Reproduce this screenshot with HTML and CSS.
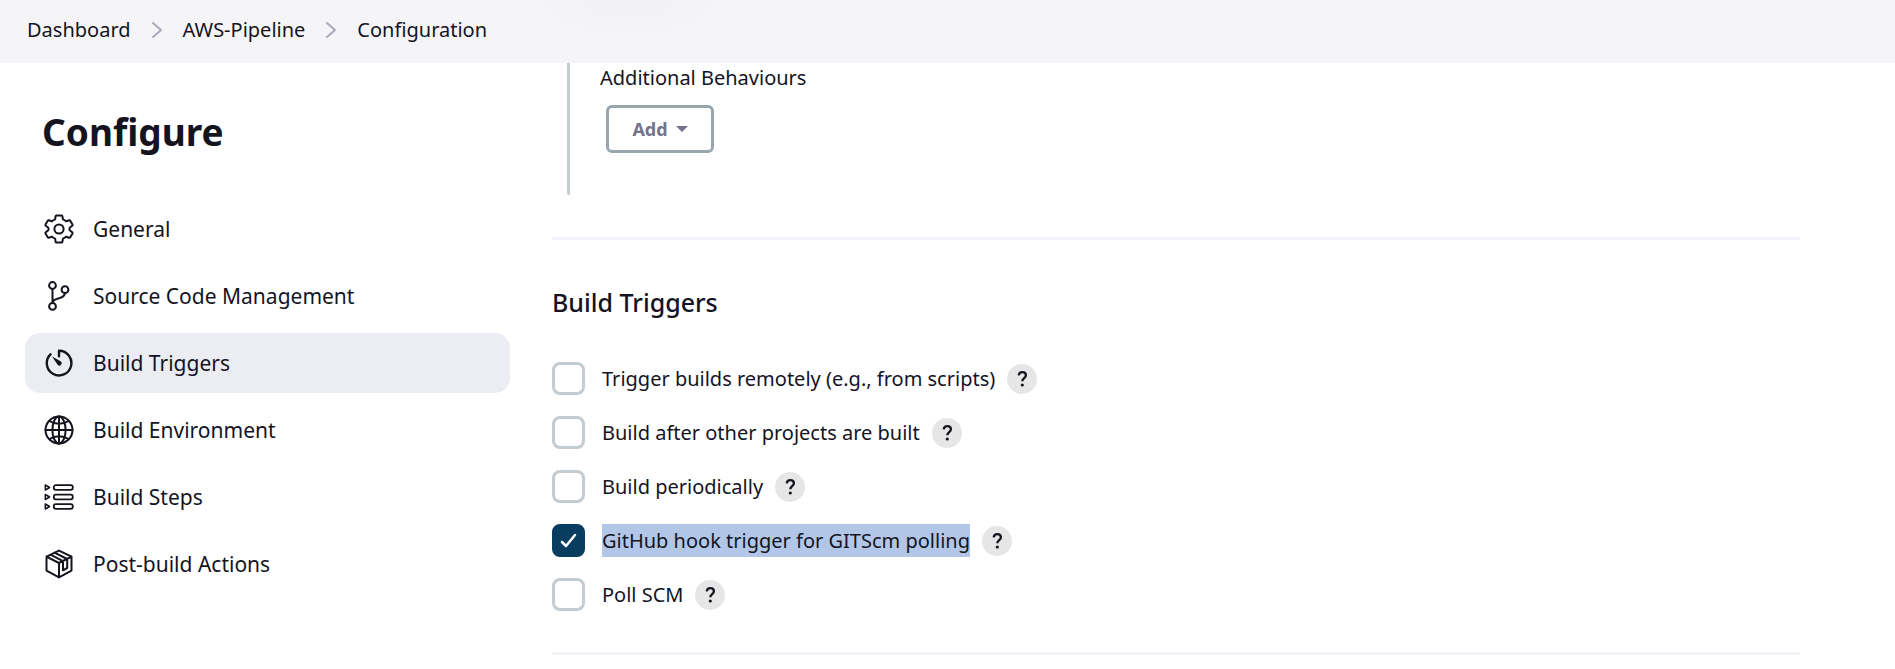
FILE: index.html
```html
<!DOCTYPE html>
<html lang="en">
<head>
<meta charset="utf-8">
<title>AWS-Pipeline Configuration</title>
<link rel="stylesheet" href="styles.css">
</head>
<body>
<header class="breadcrumb-bar">
  <nav aria-label="Breadcrumb">
    <ol class="breadcrumbs">
      <li><a href="#">Dashboard</a></li>
      <li class="separator" aria-hidden="true"><svg viewBox="0 0 12 18"><path d="M2 2l8 7-8 7"/></svg></li>
      <li><a href="#">AWS-Pipeline</a></li>
      <li class="separator" aria-hidden="true"><svg viewBox="0 0 12 18"><path d="M2 2l8 7-8 7"/></svg></li>
      <li><a href="#">Configuration</a></li>
    </ol>
  </nav>
</header>
<div class="page">
  <aside class="sidebar">
    <h1 class="title">Configure</h1>
    <nav class="tasks" aria-label="Sections">
      <a class="task" href="#general">
        <svg class="icon" viewBox="0 0 30 30"><circle cx="15" cy="15" r="4.600"/><path d="M12.400 1.500h5.200q.7 0 .8.700l.5 3.200q2 .7 3.200 2l3-1.200q.7-.2 1 .4l2.400 4q.3.700-.3 1.200l-2.500 2q-.5 1.200 0 2.400l2.500 2q.6.500.3 1.200l-2.400 4q-.3.600-1 .4l-3-1.200q-1.200 1.300-3.200 2l-.5 3.200q-.1.700-.8.700h-5.200q-.7 0-.8-.7l-.5-3.200q-2-.7-3.200-2l-3 1.200q-.7.200-1-.4l-2.400-4q-.3-.7.300-1.200l2.500-2q.5-1.200 0-2.400l-2.500-2q-.6-.5-.3-1.200l2.400-4q.3-.6 1-.4l3 1.200q1.200-1.300 3.200-2l.5-3.200q.1-.7.800-.7z"/></svg>
        General
      </a>
      <a class="task" href="#scm">
        <svg class="icon" viewBox="0 0 30 30"><circle cx="8.500" cy="4.500" r="3.400"/><circle cx="21" cy="8.700" r="3.400"/><circle cx="8.500" cy="25.400" r="3.400"/><path d="M8.500 8v14M21 12.200c-.3 3.400-2.600 4.200-6 5-3.600.8-6 1.600-6.500 4.500"/></svg>
        Source Code Management
      </a>
      <a class="task task-active" href="#triggers" aria-current="true">
        <svg class="icon" viewBox="0 0 30 30"><path stroke-width="2.400" d="M15 8.200V2.800A12.300 12.300 0 1 1 6.500 6.300"/><path class="solid" d="M8 8.600l9 4.800a2.400 2.400 0 1 1-3.400 3.400z"/></svg>
        Build Triggers
      </a>
      <a class="task" href="#environment">
        <svg class="icon" viewBox="0 0 30 30"><circle cx="15" cy="15" r="13.500"/><ellipse cx="15" cy="15" rx="6.600" ry="13.500"/><path d="M15 1.500v27M1.500 15h27M5.500 6c5.500 3.800 13.500 3.800 19 0M5.500 24c5.500-3.800 13.500-3.800 19 0"/></svg>
        Build Environment
      </a>
      <a class="task" href="#steps">
        <svg class="icon" viewBox="0 0 30 30"><g stroke-width="1.800"><rect x="9.800" y="3.200" width="19" height="4.600" rx="2"/><rect x="9.800" y="12.700" width="19" height="4.600" rx="2"/><rect x="9.800" y="22.200" width="19" height="4.600" rx="2"/></g><path stroke-width="1.500" d="M1.300 3v5l4.300-2.500zM1.300 12.500v5l4.300-2.500zM1.300 22v5l4.300-2.500z"/></svg>
        Build Steps
      </a>
      <a class="task" href="#post-build">
        <svg class="icon" viewBox="0 0 30 30"><path d="M15 1.600l12.500 6v14L15 28.400 2.500 21.600v-14zM2.500 7.600L15 14l12.500-6.400M15 14v14.400M6.500 5.700L19 12.100M10.500 3.600L23.200 10M19 12.100v9.200l4.200-2.300v-9"/></svg>
        Post-build Actions
      </a>
    </nav>
  </aside>
  <main class="content">
    <section class="behaviours">
      <div class="field-label" id="behaviours-label">Additional Behaviours</div>
      <button class="add-button" type="button" aria-describedby="behaviours-label">Add<svg viewBox="0 0 12 6"><path d="M0 0h12L6 6z"/></svg></button>
    </section>
    <section class="section" id="triggers">
      <h2 class="section-title">Build Triggers</h2>
      <div class="options">
        <div class="option"><input type="checkbox" id="remote"><label for="remote">Trigger builds remotely (e.g., from scripts)</label><button class="help" type="button" aria-label="Help for remote builds"><svg viewBox="0 0 30 30"><path d="M11.700 11.300c.3-2.100 1.700-3.200 3.600-3.200 2.200 0 3.600 1.200 3.600 3.100 0 2.900-3.600 2.900-3.600 6"/><circle cx="15.300" cy="21" r="1.600"/></svg></button></div>
        <div class="option"><input type="checkbox" id="after"><label for="after">Build after other projects are built</label><button class="help" type="button" aria-label="Help for dependent builds"><svg viewBox="0 0 30 30"><path d="M11.700 11.300c.3-2.100 1.700-3.200 3.600-3.200 2.200 0 3.600 1.200 3.600 3.100 0 2.900-3.600 2.900-3.600 6"/><circle cx="15.300" cy="21" r="1.600"/></svg></button></div>
        <div class="option"><input type="checkbox" id="periodic"><label for="periodic">Build periodically</label><button class="help" type="button" aria-label="Help for periodic builds"><svg viewBox="0 0 30 30"><path d="M11.700 11.300c.3-2.100 1.700-3.200 3.600-3.200 2.200 0 3.600 1.200 3.600 3.100 0 2.900-3.600 2.900-3.600 6"/><circle cx="15.300" cy="21" r="1.600"/></svg></button></div>
        <div class="option"><input type="checkbox" id="github" checked><label class="selected" for="github">GitHub hook trigger for GITScm polling</label><button class="help" type="button" aria-label="Help for GitHub hook"><svg viewBox="0 0 30 30"><path d="M11.700 11.300c.3-2.100 1.700-3.200 3.600-3.200 2.200 0 3.600 1.200 3.600 3.100 0 2.900-3.600 2.900-3.600 6"/><circle cx="15.300" cy="21" r="1.600"/></svg></button><svg class="check" viewBox="0 0 33 33" aria-hidden="true"><path d="M10 18l4 4 9-11"/></svg></div>
        <div class="option"><input type="checkbox" id="poll"><label for="poll">Poll SCM</label><button class="help" type="button" aria-label="Help for polling"><svg viewBox="0 0 30 30"><path d="M11.700 11.300c.3-2.100 1.700-3.200 3.600-3.200 2.200 0 3.600 1.200 3.600 3.100 0 2.900-3.600 2.900-3.600 6"/><circle cx="15.300" cy="21" r="1.600"/></svg></button></div>
      </div>
    </section>
  </main>
</div>
</body>
</html>
```

FILE: styles.css
```css
* {
  box-sizing: border-box;
}

body {
  margin: 0;
  background: #fff;
  color: #14141f;
  font-family: "Segoe UI", "Noto Sans", sans-serif;
  font-size: 20px;
  line-height: 33px;
}

a {
  color: inherit;
  text-decoration: none;
}

svg {
  flex: none;
  fill: none;
  stroke: currentColor;
  stroke-width: 2;
  stroke-linecap: round;
  stroke-linejoin: round;
}

.breadcrumb-bar {
  height: 63px;
  padding: 0 27px;
  background: radial-gradient(ellipse 100px 40px at 630px 0, #f1f1f3, #f5f5f8);
}

.breadcrumbs {
  display: flex;
  align-items: center;
  gap: 20px;
  height: 59px;
  margin: 0;
  padding: 0;
  list-style: none;
}

.separator {
  display: flex;
  color: #a9a9bd;
}

.separator svg {
  width: 12px;
  height: 18px;
}

.page {
  display: flex;
  gap: 42px;
  padding-right: 95px;
}

.sidebar {
  flex: none;
  width: 510px;
  padding: 42px 0 0 25px;
}

.title {
  margin: 0 0 40px;
  padding-left: 17px;
  font-size: 37px;
  line-height: 54px;
}

.tasks {
  display: flex;
  flex-direction: column;
  gap: 7px;
  font-size: 21px;
}

.task {
  display: flex;
  align-items: center;
  gap: 19px;
  height: 60px;
  padding: 0 19px;
  border-radius: 15px;
}

.task-active {
  background: #ecedf3;
}

.icon {
  width: 30px;
  height: 30px;
}

.icon .solid {
  fill: currentColor;
  stroke: none;
}

.content {
  flex: 1;
}

.behaviours {
  margin-left: 15px;
  padding: 0 0 42px 30px;
  border-left: 3px solid #c3ccd1;
  border-bottom-left-radius: 2px;
}

.field-label {
  padding-bottom: 12px;
  line-height: 30px;
}

.add-button {
  display: flex;
  align-items: center;
  justify-content: center;
  gap: 8px;
  width: 108px;
  height: 48px;
  margin-left: 6px;
  border: 3px solid #9aa6ad;
  border-radius: 6px;
  background: #fff;
  color: #73738c;
  font: 700 18px "Segoe UI", "Noto Sans", sans-serif;
}

.add-button svg {
  width: 12px;
  height: 6px;
  fill: currentColor;
  stroke: none;
}

.section {
  margin-top: 42px;
  padding: 44px 0 41px;
  border-top: 3px solid #f2f2f8;
  border-bottom: 3px solid #f2f2f8;
}

.section-title {
  margin: 0 0 42px;
  font-size: 25px;
  font-weight: 500;
  line-height: 36px;
}

.options {
  display: flex;
  flex-direction: column;
  gap: 21px;
}

.option {
  position: relative;
  display: flex;
  align-items: center;
}

.option input {
  appearance: none;
  flex: none;
  width: 33px;
  height: 33px;
  margin: 0 17px 0 0;
  border: 3px solid #c3ccd1;
  border-radius: 8px;
  background: #fff;
}

.option input:checked {
  border-color: #093d60;
  background: #093d60;
}

.check {
  position: absolute;
  top: 0;
  left: 0;
  width: 33px;
  height: 33px;
  color: #fff;
  stroke-width: 2.5;
  pointer-events: none;
}

.option .selected {
  background: #b2c7e8;
}

.help {
  display: flex;
  flex: none;
  width: 30px;
  height: 30px;
  margin: 0 0 0 12px;
  padding: 0;
  border: 0;
  border-radius: 50%;
  background: #e6e6e6;
  color: #14141f;
}

.help svg {
  width: 30px;
  height: 30px;
  stroke-width: 2.3;
  stroke-linecap: butt;
}

.help circle {
  fill: currentColor;
  stroke: none;
}
```
